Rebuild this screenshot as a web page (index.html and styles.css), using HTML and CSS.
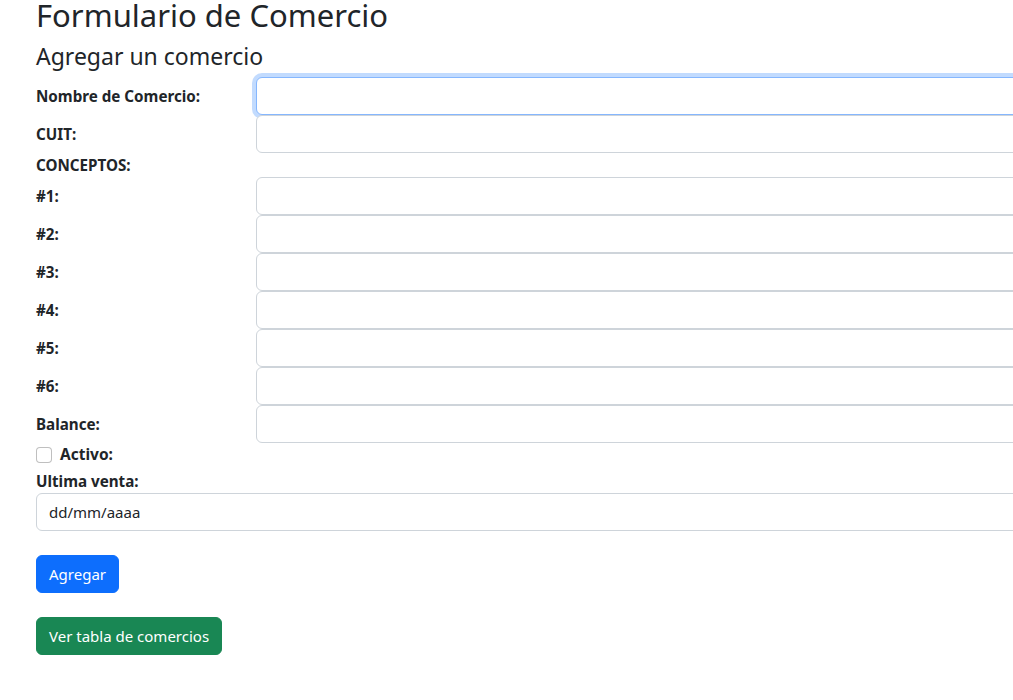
FILE: index.html
```html
<!DOCTYPE html>
<html lang="es">
<head>
<meta charset="utf-8">
<title>Formulario de Comercio</title>
<link rel="stylesheet" href="styles.css">
</head>
<body>
<div class="page">
  <h1 class="title">Formulario de Comercio</h1>
  <h4 class="subtitle">Agregar un comercio</h4>
  <form class="form">
    <div class="grid">
      <label class="label">Nombre de Comercio:</label>
      <input class="control is-focus" type="text">
      <label class="label">CUIT:</label>
      <input class="control" type="text">
      <label class="label section">CONCEPTOS:</label>
      <label class="label">#1:</label>
      <input class="control" type="text">
      <label class="label">#2:</label>
      <input class="control" type="text">
      <label class="label">#3:</label>
      <input class="control" type="text">
      <label class="label">#4:</label>
      <input class="control" type="text">
      <label class="label">#5:</label>
      <input class="control" type="text">
      <label class="label">#6:</label>
      <input class="control" type="text">
      <label class="label">Balance:</label>
      <input class="control" type="text">
    </div>
    <div class="check">
      <span class="check-box"></span>
      <label class="check-label">Activo:</label>
    </div>
    <label class="label block">Ultima venta:</label>
    <input class="control" type="text" value="dd/mm/aaaa">
    <div class="actions">
      <button class="btn btn-primary" type="button">Agregar</button>
      <button class="btn btn-success" type="button">Ver tabla de comercios</button>
    </div>
  </form>
</div>
</body>
</html>
```
FILE: styles.css
```css
html, body {
  margin: 0;
  padding: 0;
  background: #fff;
  overflow: hidden;
}
body {
  font-family: "Noto Sans", "Open Sans", sans-serif;
  font-size: 15px;
  line-height: 1.5;
  color: #212529;
}
.page {
  padding: 0 0 0 36px;
}
.title {
  margin: 0 0 12px;
  font-size: 31px;
  font-weight: 400;
  line-height: 30px;
}
.subtitle {
  margin: 0 0 7px;
  font-size: 23px;
  font-weight: 400;
  line-height: 28px;
}
.form {
  margin-right: -60px;
}
.grid {
  display: grid;
  grid-template-columns: 220px 1fr;
  align-items: center;
}
.grid > .section {
  grid-column: 1 / -1;
  line-height: 24px;
}
.label {
  font-weight: 700;
  font-size: 15.2px;
}
.label.block {
  display: block;
  line-height: 24px;
}
.control {
  box-sizing: border-box;
  display: block;
  width: 100%;
  height: 38px;
  margin: 0;
  padding: 6px 12px;
  font-family: inherit;
  font-size: 15px;
  line-height: 1.5;
  color: #212529;
  background: #fff;
  border: 1px solid #ced4da;
  border-radius: 6px;
  outline: none;
}
.control.is-focus {
  border-color: #86b7fe;
  box-shadow: 0 0 0 4px rgba(13, 110, 253, 0.25);
}
.check {
  display: flex;
  align-items: center;
  height: 24px;
  margin: 0 0 2px;
  gap: 8px;
}
.check-box {
  box-sizing: border-box;
  width: 16px;
  height: 16px;
  border: 1px solid rgba(0, 0, 0, 0.25);
  border-radius: 4px;
  background: #fff;
}
.check-label {
  font-weight: 700;
  font-size: 15.5px;
}
.actions {
  display: flex;
  flex-direction: column;
  align-items: flex-start;
  gap: 24px;
  margin-top: 24px;
}
.btn {
  font-family: inherit;
  font-size: 15px;
  line-height: 24px;
  padding: 6px 12px;
  border-radius: 6px;
  border: 1px solid transparent;
  color: #fff;
  cursor: pointer;
}
.btn-primary {
  background: #0d6efd;
  border-color: #0d6efd;
}
.btn-success {
  background: #198754;
  border-color: #198754;
}
```
